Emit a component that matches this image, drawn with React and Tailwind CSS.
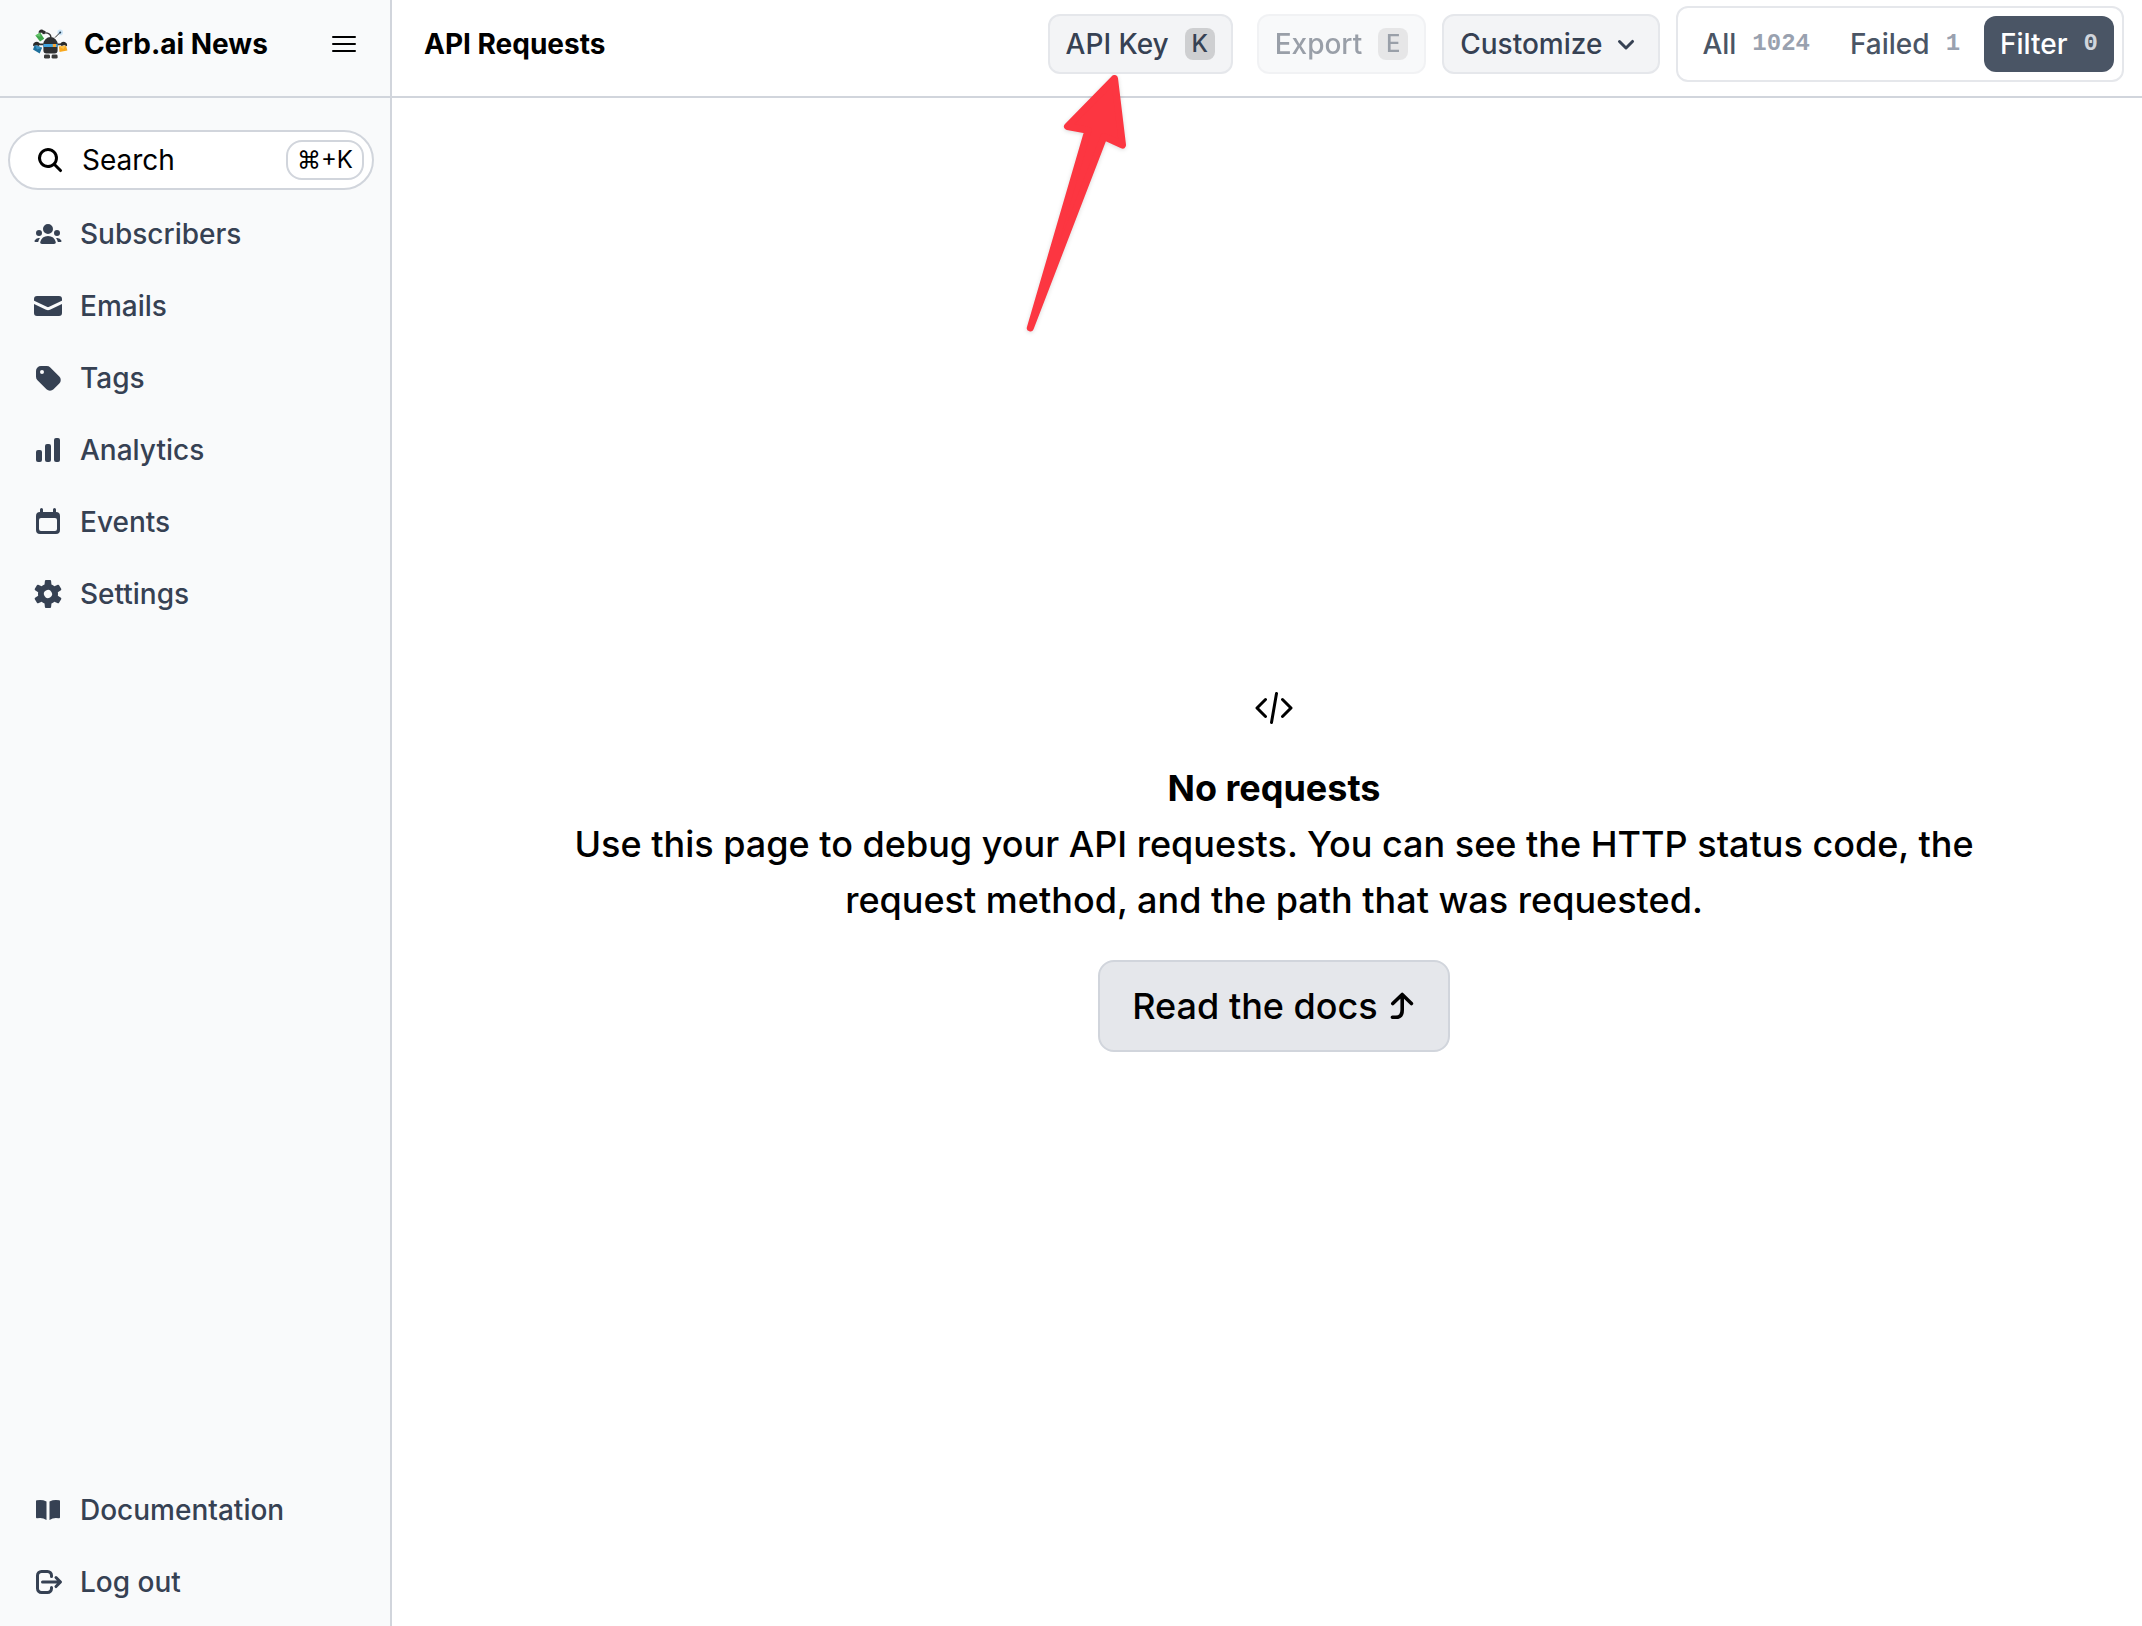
import React from 'react';
import { HiMiniCodeBracket } from 'react-icons/hi2';

// 16px solid icon paths
const icons = {
    search: 'M9.965 11.026a5 5 0 1 1 1.06-1.06l2.755 2.754a.75.75 0 1 1-1.06 1.06l-2.755-2.754ZM10.5 7a3.5 3.5 0 1 1-7 0 3.5 3.5 0 0 1 7 0Z',
    users: 'M8 8a2.5 2.5 0 1 0 0-5 2.5 2.5 0 0 0 0 5ZM3.156 11.763c.16-.629.44-1.21.813-1.72a2.5 2.5 0 0 0-2.725 1.377c-.136.287.102.58.418.58h1.449c.01-.077.025-.156.045-.237ZM12.847 11.763c.02.08.036.16.046.237h1.446c.316 0 .554-.293.417-.579a2.5 2.5 0 0 0-2.722-1.378c.374.51.653 1.09.813 1.72ZM14 7.5a1.5 1.5 0 1 1-3 0 1.5 1.5 0 0 1 3 0ZM3.5 9a1.5 1.5 0 1 0 0-3 1.5 1.5 0 0 0 0 3ZM5 13c-.552 0-1.013-.455-.876-.99a4.002 4.002 0 0 1 7.753 0c.136.535-.324.99-.877.99H5Z',
    envelope: 'M2.5 3A1.5 1.5 0 0 0 1 4.5v.793c.026.009.051.02.076.032L7.674 8.51c.206.1.446.1.652 0l6.598-3.185A.755.755 0 0 1 15 5.293V4.5A1.5 1.5 0 0 0 13.5 3h-11ZM15 6.954 8.978 9.86a2.25 2.25 0 0 1-1.956 0L1 6.954V11.5A1.5 1.5 0 0 0 2.5 13h11a1.5 1.5 0 0 0 1.5-1.5V6.954Z',
    tag: 'M4.5 2A2.5 2.5 0 0 0 2 4.5v2.879a2.5 2.5 0 0 0 .732 1.767l4.5 4.5a2.5 2.5 0 0 0 3.536 0l2.878-2.878a2.5 2.5 0 0 0 0-3.536l-4.5-4.5A2.5 2.5 0 0 0 7.38 2H4.5ZM5 6a1 1 0 1 0 0-2 1 1 0 0 0 0 2Z',
    chart: 'M12 2a1 1 0 0 0-1 1v10a1 1 0 0 0 1 1h1a1 1 0 0 0 1-1V3a1 1 0 0 0-1-1h-1ZM6.5 6a1 1 0 0 1 1-1h1a1 1 0 0 1 1 1v7a1 1 0 0 1-1 1h-1a1 1 0 0 1-1-1V6ZM2 9a1 1 0 0 1 1-1h1a1 1 0 0 1 1 1v4a1 1 0 0 1-1 1H3a1 1 0 0 1-1-1V9Z',
    calendar: 'M4 1.75a.75.75 0 0 1 1.5 0V3h5V1.75a.75.75 0 0 1 1.5 0V3a2 2 0 0 1 2 2v7a2 2 0 0 1-2 2H4a2 2 0 0 1-2-2V5a2 2 0 0 1 2-2V1.75ZM4.5 6a1 1 0 0 0-1 1v4.5a1 1 0 0 0 1 1h7a1 1 0 0 0 1-1V7a1 1 0 0 0-1-1h-7Z',
    cog: 'M6.455 1.45A.5.5 0 0 1 6.952 1h2.096a.5.5 0 0 1 .497.45l.186 1.858a4.996 4.996 0 0 1 1.466.848l1.703-.769a.5.5 0 0 1 .639.206l1.047 1.814a.5.5 0 0 1-.14.656l-1.517 1.09a5.026 5.026 0 0 1 0 1.694l1.516 1.09a.5.5 0 0 1 .141.656l-1.047 1.814a.5.5 0 0 1-.639.206l-1.703-.768c-.433.36-.928.649-1.466.847l-.186 1.858a.5.5 0 0 1-.497.45H6.952a.5.5 0 0 1-.497-.45l-.186-1.858a4.993 4.993 0 0 1-1.466-.848l-1.703.769a.5.5 0 0 1-.639-.206l-1.047-1.814a.5.5 0 0 1 .14-.656l1.517-1.09a5.033 5.033 0 0 1 0-1.694l-1.516-1.09a.5.5 0 0 1-.141-.656L2.46 3.593a.5.5 0 0 1 .639-.206l1.703.769c.433-.36.928-.65 1.466-.848l.186-1.858Zm-.177 7.567-.022-.037a2 2 0 0 1 3.466-1.997l.022.037a2 2 0 0 1-3.466 1.997Z',
    book: 'M7.25 3.688a8.035 8.035 0 0 0-4.872-.523A.48.48 0 0 0 2 3.64v7.994c0 .345.342.588.679.512a6.02 6.02 0 0 1 4.571.81V3.688ZM8.75 12.956a6.02 6.02 0 0 1 4.571-.81c.337.075.679-.167.679-.512V3.64a.48.48 0 0 0-.378-.475 8.034 8.034 0 0 0-4.872.523v9.268Z',
    logout: 'M2 4.75A2.75 2.75 0 0 1 4.75 2h3a2.75 2.75 0 0 1 2.75 2.75v.5a.75.75 0 0 1-1.5 0v-.5c0-.69-.56-1.25-1.25-1.25h-3c-.69 0-1.25.56-1.25 1.25v6.5c0 .69.56 1.25 1.25 1.25h3c.69 0 1.25-.56 1.25-1.25v-.5a.75.75 0 0 1 1.5 0v.5A2.75 2.75 0 0 1 7.75 14h-3A2.75 2.75 0 0 1 2 11.25v-6.5Zm9.47.47a.75.75 0 0 1 1.06 0l2.25 2.25a.75.75 0 0 1 0 1.06l-2.25 2.25a.75.75 0 1 1-1.06-1.06l.97-.97H5.25a.75.75 0 0 1 0-1.5h7.19l-.97-.97a.75.75 0 0 1 0-1.06Z',
    chevron: 'M4.22 6.22a.75.75 0 0 1 1.06 0L8 8.94l2.72-2.72a.75.75 0 1 1 1.06 1.06l-3.25 3.25a.75.75 0 0 1-1.06 0L4.22 7.28a.75.75 0 0 1 0-1.06Z',
};

const mainLinks = [
    { label: 'Subscribers', icon: 'users' },
    { label: 'Emails', icon: 'envelope' },
    { label: 'Tags', icon: 'tag' },
    { label: 'Analytics', icon: 'chart' },
    { label: 'Events', icon: 'calendar' },
    { label: 'Settings', icon: 'cog' },
];

const footerLinks = [
    { label: 'Documentation', icon: 'book' },
    { label: 'Log out', icon: 'logout' },
];

const filters = [
    { label: 'All', count: 1024 },
    { label: 'Failed', count: 1 },
    { label: 'Filter', count: 0, active: true },
];

function Icon({ name }) {
    return (
        <svg viewBox="0 0 16 16" fill="currentColor" className="size-8 shrink-0" aria-hidden="true">
            <path fillRule="evenodd" clipRule="evenodd" d={icons[name]} />
        </svg>
    );
}

function Logo() {
    return (
        <svg viewBox="0 0 36 36" className="size-9 shrink-0" aria-hidden="true">
            {/* Antenna */}
            <circle cx="28.2" cy="6.4" r="2.8" fill="#cfe6f7" />
            <path d="M23 11.6 28 6.6" stroke="#333" strokeWidth="1" />
            <circle cx="28.2" cy="6.4" r="1" fill="#1f3a52" />
            {/* Arms */}
            <path d="M10.5 7.5C13 6.5 18.6 6 19 11.5" fill="none" stroke="#333" strokeWidth="1.4" />
            <path d="M12 18.4H5.5M25 18.4h6.5" stroke="#333" strokeWidth="1.8" />
            {/* Envelopes */}
            <path d="M3.4 9.4 8.2 6.4l4 6.4-4.2 2.6Z" fill="#3fa64b" />
            <path d="m3.4 9.4 5 1.4-.2-4.4Z" fill="#66c46a" />
            <path d="m2.8 18.8 7.3 3-2.4 5.6L1 23.6Z" fill="#1d6f9c" />
            <path d="m2.8 18.8 2.2 4.7 5.1-1.7Z" fill="#3b92c1" />
            <path d="m26.8 20.6 7.2-1.2 1.4 5.2-7.8 1.4Z" fill="#f9a91f" />
            <path d="m26.8 20.6 4.6 2.4L34 19.4Z" fill="#fdc04a" />
            {/* Hands */}
            <path d="M6.5 6.8A3 3 0 0 1 11.7 4.6l2 .6-1.6 3.4-2-1.8Z" fill="#2b2b2b" />
            <path d="M1.2 20.2a3.6 3.6 0 0 1 6.6-2.6l-1 2.4-2.8-.9Z" fill="#2b2b2b" />
            <path d="M35 20.2a3.6 3.6 0 0 0-6.6-2.6l1 2.4 2.8-.9Z" fill="#2b2b2b" />
            {/* Body */}
            <path d="M11.4 18.2a7.1 7.1 0 0 1 14.2 0v6.4a3 3 0 0 1-3 3h-8.2a3 3 0 0 1-3-3Z" fill="#2f3032" />
            <path d="M11.4 18h14.2v3H11.4Z" fill="#42a5df" />
            <path d="M20.8 18H24v3h-3.2Z" fill="#f7a93b" />
            <rect x="12" y="28.6" width="6" height="4" rx="1.4" fill="#3a3a3a" />
            <rect x="19.6" y="28.6" width="6" height="4" rx="1.4" fill="#3a3a3a" />
        </svg>
    );
}

function NavLink({ label, icon }) {
    return (
        <a href="#" className="flex h-14 items-center gap-4 px-6 font-medium text-gray-700">
            <Icon name={icon} />
            {label}
        </a>
    );
}

function Sidebar() {
    return (
        <aside className="flex w-[392px] shrink-0 flex-col border-r-2 border-gray-300 bg-gray-50">
            <div className="border-b-2 border-gray-300 pt-1.5 pb-3.5">
                <div className="flex h-19 items-center gap-4 px-8">
                    <Logo />
                    <span className="flex-1 font-bold">Cerb.ai News</span>
                    <button type="button" aria-label="Menu">
                        <svg viewBox="0 0 28 28" className="size-7" stroke="currentColor" strokeWidth="2" strokeLinecap="round">
                            <path d="M3 7h22M3 14h22M3 21h22" />
                        </svg>
                    </button>
                </div>
            </div>
            <div className="flex flex-1 flex-col pt-8 pr-4 pb-4 pl-2">
                <button type="button" className="flex h-15 items-center gap-4 rounded-full border-2 border-gray-300 bg-white pr-2 pl-6">
                    <Icon name="search" />
                    <span className="flex-1 text-left">Search</span>
                    <kbd className="flex h-10 items-center rounded-2xl border-2 border-gray-300 px-[9px] font-['Inter',sans-serif] text-2xl">⌘+K</kbd>
                </button>
                <nav className="mt-4 flex flex-1 flex-col gap-4">
                    {mainLinks.map((link) => (
                        <NavLink key={link.label} {...link} />
                    ))}
                    <div className="mt-auto flex flex-col gap-4">
                        {footerLinks.map((link) => (
                            <NavLink key={link.label} {...link} />
                        ))}
                    </div>
                </nav>
            </div>
        </aside>
    );
}

function ActionButton({ children, hotkey, disabled }) {
    return (
        <button
            type="button"
            disabled={disabled}
            className="flex h-15 items-center gap-4 rounded-xl border-2 border-gray-200 bg-gray-100 px-4 font-medium text-gray-700 disabled:opacity-50"
        >
            {children}
            <kbd className="flex h-8 w-[30px] items-center justify-center rounded-lg bg-black/15 font-['Inter',sans-serif] text-2xl">{hotkey}</kbd>
        </button>
    );
}

function Pointer() {
    return (
        <svg
            viewBox="0 0 112 264"
            className="pointer-events-none absolute top-full -left-7 z-10 h-[264px] w-28 max-w-none drop-shadow-sm"
            aria-hidden="true"
        >
            <path
                d="M94.5 4.5 47.5 52.5 68 56.3 10.3 254 84 62.5 102.5 71Z"
                fill="#fc3641"
                stroke="#fc3641"
                strokeWidth="7"
                strokeLinejoin="round"
            />
        </svg>
    );
}

function Toolbar() {
    return (
        <header className="border-b-2 border-gray-300 pt-1.5 pb-3.5">
            <div className="flex h-19 items-center pr-[18px] pl-8">
                <h1 className="flex-1 font-bold">API Requests</h1>
                <div className="relative mr-6">
                    <ActionButton hotkey="K">API Key</ActionButton>
                    <Pointer />
                </div>
                <ActionButton hotkey="E" disabled>Export</ActionButton>
                <button type="button" className="ml-4 flex h-15 items-center gap-2 rounded-xl border-2 border-gray-200 bg-gray-100 px-4 font-medium text-gray-700">
                    Customize
                    <Icon name="chevron" />
                </button>
                <div className="ml-4 flex gap-2 rounded-xl border-2 border-gray-200 p-2">
                    {filters.map(({ label, count, active }) => (
                        <button
                            key={label}
                            type="button"
                            className={`flex h-14 items-center gap-4 rounded-xl px-4 font-medium ${
                                active ? 'bg-gray-600 text-white' : 'text-gray-600'
                            }`}
                        >
                            {label}
                            <span className={`font-['Liberation_Mono',monospace] text-2xl font-bold ${active ? 'text-gray-300' : 'text-gray-400'}`}>
                                {count}
                            </span>
                        </button>
                    ))}
                </div>
            </div>
        </header>
    );
}

export default function App() {
    return (
        <div className="flex min-h-screen bg-white font-['Inter',sans-serif] text-[28px] leading-10 text-black">
            <Sidebar />
            <div className="flex min-w-0 flex-1 flex-col">
                <Toolbar />
                <main className="flex flex-1 flex-col items-center justify-center pt-3 pl-3.5 text-center text-4xl leading-14 font-medium">
                    <HiMiniCodeBracket className="mt-1 mb-8 size-10" />
                    <h2 className="font-bold">No requests</h2>
                    <p className="max-w-[1440px]">
                        Use this page to debug your API requests. You can see the HTTP status code, the request method, and the path that was requested.
                    </p>
                    <a href="#" className="mt-8 flex items-center gap-3 rounded-2xl border-2 border-gray-300 bg-gray-200 px-8 py-4">
                        Read the docs
                        <svg
                            viewBox="0 0 26 30"
                            className="h-[30px] w-[26px]"
                            fill="none"
                            stroke="currentColor"
                            strokeWidth="3.6"
                            strokeLinecap="round"
                            strokeLinejoin="round"
                            aria-hidden="true"
                        >
                            <path d="M2.8 12.5 12.2 3.5 21.4 12.5M12.2 4V19Q12.2 26.3 6 26.3H2.4" />
                        </svg>
                    </a>
                </main>
            </div>
        </div>
    );
}
